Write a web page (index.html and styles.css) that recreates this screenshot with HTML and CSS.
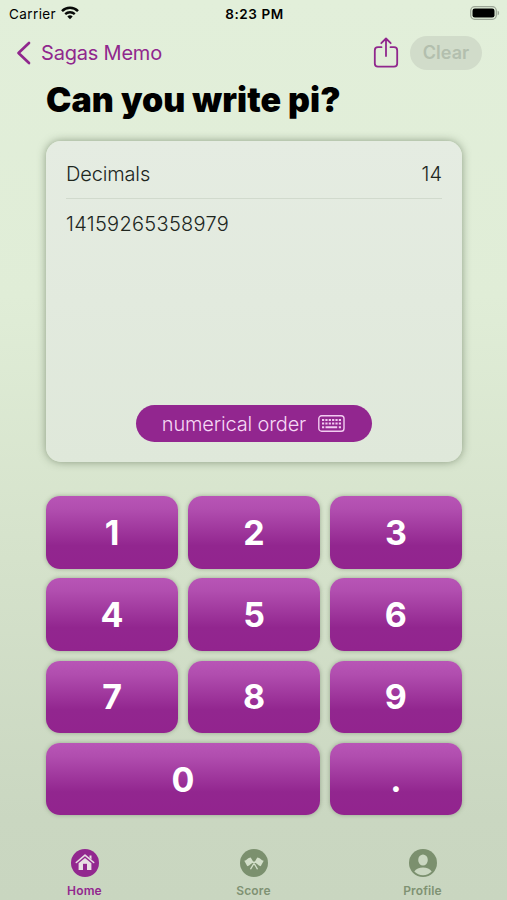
FILE: index.html
```html
<!DOCTYPE html>
<html lang="en">
<head>
<meta charset="utf-8">
<meta name="viewport" content="width=device-width">
<title>Can you write pi?</title>
<link rel="stylesheet" href="styles.css">
</head>
<body>
<div class="app">
  <header class="status">
    <div class="carrier"><span>Carrier</span>
      <svg width="18" height="14" viewBox="0 0 18 14" fill="none" stroke="#080a08"><path d="M1 5.1C5.4 .7 12.6.7 17 5.1" stroke-width="2.5"/><path d="M4.2 8.2c2.7-2.6 6.9-2.6 9.6 0" stroke-width="2.3"/><path d="M9 13.2 6.3 10.5a3.8 3.8 0 0 1 5.4 0z" fill="#080a08" stroke="none"/></svg>
    </div>
    <time class="clock">8:23 PM</time>
    <svg class="battery" width="30" height="14" viewBox="0 0 30 14"><rect x=".7" y=".7" width="25.6" height="12.6" rx="4" fill="none" stroke="#9ca697" stroke-width="1.3"/><rect x="2.5" y="2.5" width="22" height="9" rx="2.3" fill="#000"/><path d="M27.6 4.7c2 .5 2 4.1 0 4.6z" fill="#9ca697"/></svg>
  </header>
  <nav class="navbar">
    <a class="back"><svg width="16" height="24" viewBox="0 0 16 24" fill="none" stroke="#90278d" stroke-width="2.7" stroke-linecap="round" stroke-linejoin="round"><path d="M13 2 2.5 12 13 22"/></svg><span>Sagas Memo</span></a>
    <div class="actions">
      <svg width="26" height="32" viewBox="0 0 26 32" fill="none" stroke="#90278d" stroke-width="1.8" stroke-linecap="round" stroke-linejoin="round"><path d="M8.500 10.200H5a3.200 3.200 0 0 0-3.200 3.200v13A3.200 3.200 0 0 0 5 29.600h16a3.200 3.200 0 0 0 3.200-3.200v-13a3.200 3.200 0 0 0-3.200-3.200h-3.500M13 19V1.800M8.300 6.200 13 1.500l4.700 4.700"/></svg>
      <button class="clear" disabled>Clear</button>
    </div>
  </nav>
  <main>
    <h1>Can you write pi?</h1>
    <section class="card">
      <div class="summary"><span class="label">Decimals</span><span class="count">14</span></div>
      <p class="digits">14159265358979</p>
      <button class="order"><span>numerical order</span>
        <svg width="27" height="17" viewBox="0 0 27 17" fill="none" stroke="#f2cdf1"><rect x=".8" y=".8" width="25.2" height="15.400" rx="2.800" stroke-width="1.400"/><path d="M4 5h19M4 8.500h19" stroke-width="2.200" stroke-dasharray="2.200 1.160"/><path d="M4 12.200h2.200M7.500 12.200h11.700M20.800 12.200H23" stroke-width="2"/></svg>
      </button>
    </section>
    <section class="keypad">
      <button>1</button><button>2</button><button>3</button>
      <button>4</button><button>5</button><button>6</button>
      <button>7</button><button>8</button><button>9</button>
      <button class="wide">0</button><button>.</button>
    </section>
  </main>
  <footer class="tabs">
    <a class="tab active"><svg width="28" height="28" viewBox="0 0 28 28"><circle cx="14" cy="14" r="14" fill="#92278f"/><path d="m5.300 13.500 8.700-7.300 8.700 7.300" fill="none" stroke="#e8dfe3" stroke-width="1.600" stroke-linecap="round" stroke-linejoin="round"/><path d="M18.500 6.500h2v4l-2-1.700zM7.600 14.300 14 9l6.400 5.300V21H7.600z" fill="#e8dfe3"/><path d="M12 14.800h4V21h-4z" fill="#92278f"/></svg><span>Home</span></a>
    <a class="tab"><svg width="28" height="28" viewBox="0 0 28 28"><circle cx="14" cy="14" r="14" fill="#7b906e"/><g fill="#d3dfca"><path d="M4.300 11.800c2.400-.4 3.600-3.200 6.400-3.400l3 5.200c-2.600.4-3.600 3.300-6.400 3.600zM23.700 11.800c-2.400-.4-3.600-3.200-6.400-3.400l-3 5.200c2.600.4 3.600 3.300 6.400 3.600z"/></g><path d="m13.200 13 4.100 6.800M14.800 13l-4.100 6.800" stroke="#d3dfca" stroke-width="1.300" stroke-linecap="round"/></svg><span>Score</span></a>
    <a class="tab"><svg width="28" height="28" viewBox="0 0 28 28"><circle cx="14" cy="14" r="14" fill="#7b906e"/><ellipse cx="14" cy="11" rx="4.800" ry="5.500" fill="#cad7c1"/><path d="M5.300 22.500c1.600-2.600 5-4 8.700-4s7.100 1.400 8.700 4c-2.300 2.400-5.300 3.700-8.700 3.700s-6.400-1.300-8.700-3.700z" fill="#cad7c1"/></svg><span>Profile</span></a>
  </footer>
</div>
</body>
</html>
```
FILE: styles.css
```css
* { box-sizing: border-box; }
body { margin: 0; font-family: Inter, "Liberation Sans", sans-serif; color: #000; }
button { border: 0; padding: 0; font: inherit; }
svg { display: block; flex: none; }
.app {
  height: 900px;
  display: flex;
  flex-direction: column;
  background: linear-gradient(#e2efda 0%, #e0edd7 33%, #d5e2cb 62%, #cad7c1 91%, #c9d6c0 100%);
}
.status {
  height: 28px;
  padding: 0 7px 0 9px;
  display: grid;
  grid-template-columns: 1fr auto 1fr;
  align-items: center;
  font-size: 13.5px;
}
.carrier { display: flex; align-items: center; gap: 5px; letter-spacing: 0.4px; }
.carrier svg { margin-top: -2px; }
.clock { font-weight: 600; font-size: 13.5px; letter-spacing: 0.6px; }
.battery { justify-self: end; margin-top: -2px; }
.navbar {
  height: 49px;
  padding: 0 25px 0 16px;
  display: flex;
  justify-content: space-between;
  align-items: center;
}
.back { display: flex; align-items: center; gap: 9px; font-size: 20px; letter-spacing: -0.2px; color: #90278d; }
.actions { display: flex; align-items: center; gap: 11px; }
.clear {
  width: 72px;
  height: 34px;
  border-radius: 17px;
  background: #d1dcca;
  color: #b3bfae;
  font-size: 18px;
  font-weight: 600;
}
main { padding: 0 45px 0 46px; }
h1 { margin: 0; height: 64px; font-size: 34px; line-height: 46px; font-weight: 900; letter-spacing: 0.08px; white-space: nowrap; }
.card {
  height: 321px;
  padding: 0 20px 20px;
  display: flex;
  flex-direction: column;
  border-radius: 15px;
  background: linear-gradient(#e5ece2, #dfe8da);
  box-shadow: 0 0 8px rgba(55, 75, 45, 0.5);
}
.summary {
  height: 58px;
  padding-top: 9px;
  display: flex;
  justify-content: space-between;
  align-items: center;
  border-bottom: 1px solid #d1dacd;
  font-size: 20px;
  font-weight: 300;
  color: #20261e;
}
.label { letter-spacing: -0.15px; }
.digits { margin: 13px 0 0; font-size: 20px; line-height: 24px; font-weight: 300; letter-spacing: 0.3px; color: #20261e; }
.order {
  width: 236px;
  height: 37px;
  margin: auto auto 0;
  padding-right: 1px;
  display: flex;
  align-items: center;
  justify-content: center;
  gap: 12px;
  border-radius: 19px;
  background: #92268f;
  color: #f6d9f5;
  font-size: 20px;
  font-weight: 300;
  letter-spacing: -0.17px;
  white-space: nowrap;
}
.keypad {
  margin-top: 34px;
  display: grid;
  grid-template-columns: repeat(3, 1fr);
  grid-auto-rows: 72.6px;
  gap: 9.7px;
}
.keypad button {
  border-radius: 14px;
  background: linear-gradient(#b855b6 0%, #b14eaf 18%, #92268f 68%, #92248e 100%);
  box-shadow: 0 0 4px rgba(65, 85, 55, 0.4);
  color: #fff;
  font-size: 34px;
  font-weight: 650;
}
.keypad .wide { grid-column: span 2; }
.tabs {
  margin-top: auto;
  height: 51px;
  display: grid;
  grid-template-columns: repeat(3, 1fr);
}
.tab { display: flex; flex-direction: column; align-items: center; gap: 6px; font-size: 12px; line-height: 15px; font-weight: 600; letter-spacing: 0.15px; color: #7f9273; }
.active { color: #92278f; }
```
